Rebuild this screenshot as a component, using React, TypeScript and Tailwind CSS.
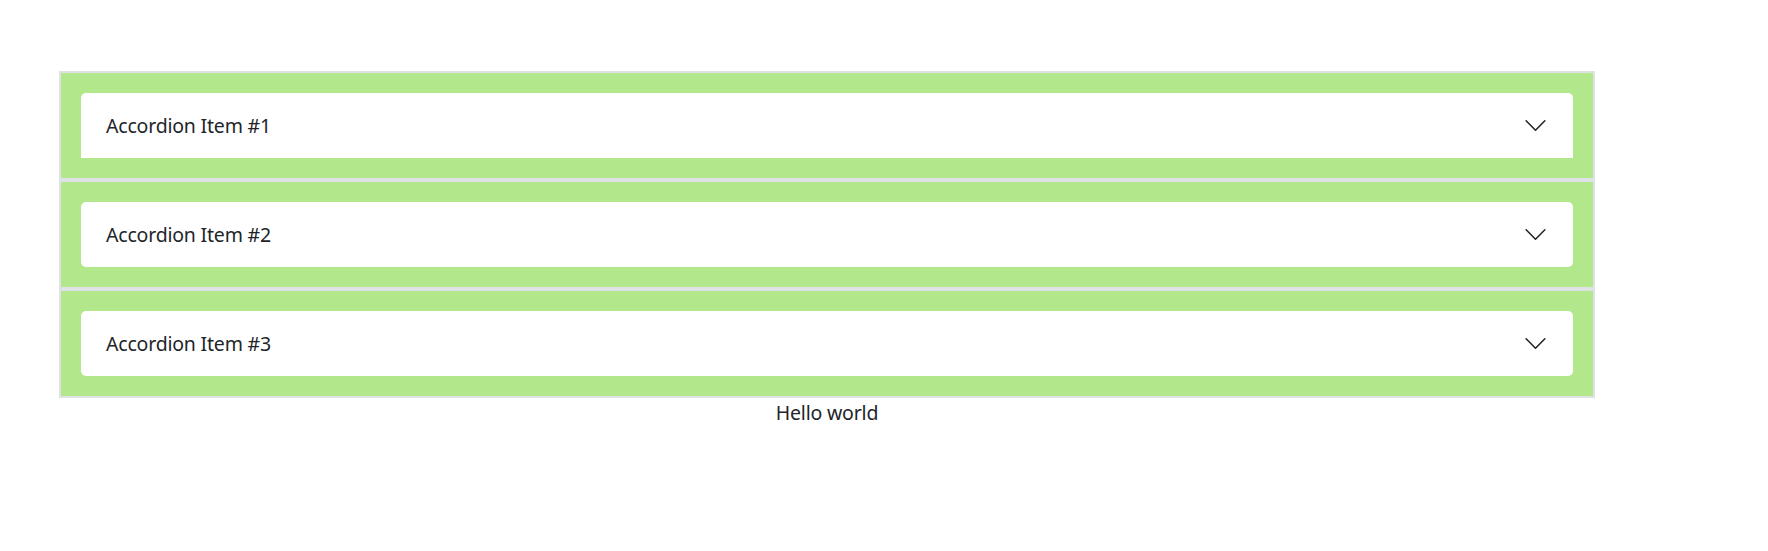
import { useState } from "react";

const items = [
    { id: 1, title: "Accordion Item #1" },
    { id: 2, title: "Accordion Item #2" },
    { id: 3, title: "Accordion Item #3" },
];

function Chevron() {
    return (
        <svg viewBox="0 0 16 16" className="w-[25px] h-[25px] shrink-0" fill="none" stroke="#212529" strokeWidth="1" strokeLinecap="round" strokeLinejoin="round">
            <path d="M2 5L8 11L14 5" />
        </svg>
    );
}

export default function App() {
    const [open, setOpen] = useState<number | null>(null);
    return (
        <div className="min-h-[551px] bg-white pt-[71px] pl-[59px] text-[#212529] font-['Noto_Sans','Open_Sans',sans-serif] text-[19.5px] tracking-[-0.2px] leading-[30px]">
            <div className="w-[1536px]">
                {/* Accordion */}
                <div className="flex flex-col">
                    {items.map((item, i) => (
                        <div key={item.id} className="border-2 border-[#dee2e6] bg-[#b2e78b] p-[20px]">
                            <button
                                onClick={() => setOpen(open === item.id ? null : item.id)}
                                className={
                                    "w-full h-[65px] bg-white flex items-center justify-between px-[25px] text-left " +
                                    (i === 0 ? "rounded-t-[5px]" : "rounded-[5px]")
                                }
                            >
                                <span>{item.title}</span>
                                <Chevron />
                            </button>
                            {open === item.id && (
                                <div className="bg-white px-[25px] py-[20px]">Content for {item.title}</div>
                            )}
                        </div>
                    ))}
                </div>
                <p className="text-center">Hello world</p>
            </div>
        </div>
    );
}
